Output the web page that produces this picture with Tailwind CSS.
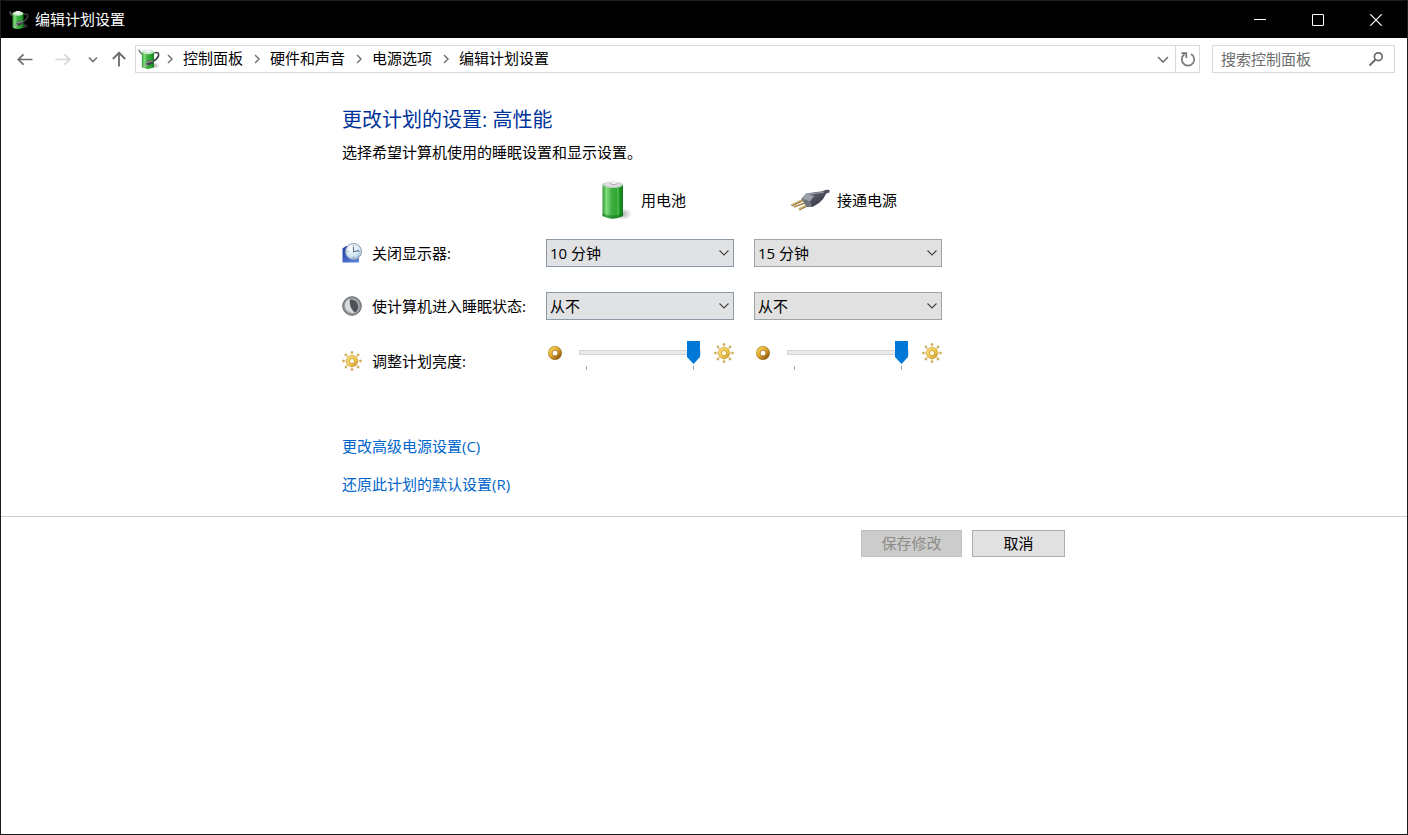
<!DOCTYPE html>
<html lang="zh-CN">
<head>
  <meta charset="UTF-8">
  <meta name="viewport" content="width=device-width, initial-scale=1.0">
  <title>编辑计划设置</title>
  <script src="https://cdn.jsdelivr.net/npm/@tailwindcss/browser@4"></script>
</head>
<body class="min-h-screen flex flex-col bg-white border border-t-0 border-[#1c1c1c] text-black text-[15px] leading-5 font-['Open_Sans','Noto_Sans_CJK_SC',sans-serif]">

  <!-- Shared icon shapes -->
  <svg class="w-0 h-0" aria-hidden="true">
    <defs>
      <linearGradient id="green" x1="0" x2="1" y1="0" y2="0">
        <stop offset="0" stop-color="#2f9a35"/>
        <stop offset="0.2" stop-color="#7fdc7c"/>
        <stop offset="0.45" stop-color="#3fae42"/>
        <stop offset="0.75" stop-color="#2aa52f"/>
        <stop offset="1" stop-color="#0f7a1a"/>
      </linearGradient>
      <linearGradient id="gold" x1="0" x2="1" y1="0" y2="1">
        <stop offset="0" stop-color="#f3d04f"/>
        <stop offset="0.5" stop-color="#dda02c"/>
        <stop offset="1" stop-color="#8a5a12"/>
      </linearGradient>
      <linearGradient id="sunGold" x1="0" x2="1" y1="0" y2="1">
        <stop offset="0" stop-color="#fbe88e"/>
        <stop offset="0.6" stop-color="#efc445"/>
        <stop offset="1" stop-color="#b98a2a"/>
      </linearGradient>
      <linearGradient id="plugBody" x1="0" x2="1" y1="0" y2="1">
        <stop offset="0" stop-color="#8a8e99"/>
        <stop offset="0.5" stop-color="#4c505c"/>
        <stop offset="1" stop-color="#23252d"/>
      </linearGradient>
      <linearGradient id="screen" x1="0" x2="1" y1="0" y2="1">
        <stop offset="0" stop-color="#2238a8"/>
        <stop offset="1" stop-color="#5f8ce8"/>
      </linearGradient>
      <radialGradient id="face" cx="0.4" cy="0.3" r="0.8">
        <stop offset="0" stop-color="#ffffff"/>
        <stop offset="0.6" stop-color="#d3e4f3"/>
        <stop offset="1" stop-color="#8fb0cf"/>
      </radialGradient>
      <radialGradient id="shadow">
        <stop offset="0" stop-color="#777" stop-opacity="0.6"/>
        <stop offset="1" stop-color="#777" stop-opacity="0"/>
      </radialGradient>
    </defs>
    <symbol id="power" viewBox="0 0 20 20">
      <ellipse cx="15" cy="16" rx="5" ry="3" fill="url(#shadow)"/>
      <path d="M.7 1.500Q1.500 4.500 4.500 6" fill="none" stroke="#6a6e70" stroke-width="1.300"/>
      <path d="M15 4.500Q19.500 3 18.600 7Q18 9.500 14 12" fill="none" stroke="#3c4143" stroke-width="1.500"/>
      <path d="M3.500 3.500V17.500Q8.500 20.500 14.500 17.500V3.500Z" fill="url(#green)"/>
      <ellipse cx="9" cy="3.500" rx="5.500" ry="2.200" fill="#c9e9c9"/>
      <ellipse cx="9" cy="2.500" rx="2.600" ry="1.400" fill="#f2f0f5"/>
      <path d="M6.500 14.500L8.500 11.500L14.500 10.500L13.500 14L9.500 16Z" fill="#43494b"/>
      <path d="M7.500 13.200L13.500 11.500M5 15.300L8 14.300M6 17L9 15.500" stroke="#a3aaa5" stroke-width=".9"/>
    </symbol>
    <symbol id="sun" viewBox="0 0 20 20">
      <g fill="#dcb65c" stroke="#ab8c4c" stroke-width=".3">
        <circle cx="10" cy="1.500" r="1.200"/><circle cx="16" cy="4" r="1.200"/>
        <circle cx="18.500" cy="10" r="1.200"/><circle cx="16" cy="16" r="1.200"/>
        <circle cx="10" cy="18.500" r="1.200"/><circle cx="4" cy="16" r="1.200"/>
        <circle cx="1.500" cy="10" r="1.200"/><circle cx="4" cy="4" r="1.200"/>
      </g>
      <path d="M10 2V18M2 10H18M4.500 4.500L15.500 15.500M15.500 4.500L4.500 15.500" stroke="#ead08c" stroke-width="1"/>
      <circle cx="10" cy="10" r="5.800" fill="url(#sunGold)" stroke="#c39a3c" stroke-width=".6"/>
      <circle cx="10" cy="10" r="2.600" fill="#fffae0" stroke="#c49632" stroke-width=".8"/>
    </symbol>
    <symbol id="ring" viewBox="0 0 14 14">
      <circle cx="7" cy="7" r="4.700" fill="none" stroke="#9c6e1c" stroke-width="4.400"/>
      <circle cx="7" cy="7" r="4.700" fill="none" stroke="url(#gold)" stroke-width="3.600"/>
    </symbol>
    <symbol id="down" viewBox="0 0 12 12">
      <path d="M1.500 3.500L6 8L10.500 3.500" fill="none" stroke="currentColor" stroke-width="1.100"/>
    </symbol>
    <symbol id="crumb" viewBox="0 0 8 10">
      <path d="M2 1L6 5L2 9" fill="none" stroke="#777" stroke-width="1.500"/>
    </symbol>
  </svg>

  <header class="h-[38px] flex items-center bg-black border-t border-[#1c1c1c] text-white">
    <svg class="w-5 h-5 ml-2 mr-1.5"><use href="#power"/></svg>
    <span class="flex-1 pb-0.5">编辑计划设置</span>
    <button type="button" aria-label="最小化" class="w-[58px] h-full flex items-center justify-center hover:bg-white/20">
      <svg class="w-3 h-3" viewBox="0 0 12 12"><path d="M0 5.500H12" stroke="#fff"/></svg>
    </button>
    <button type="button" aria-label="最大化" class="w-[58px] h-full flex items-center justify-center hover:bg-white/20">
      <svg class="w-3 h-3" viewBox="0 0 12 12"><path d="M.5 .5H11.500V11.500H.5Z" fill="none" stroke="#fff"/></svg>
    </button>
    <button type="button" aria-label="关闭" class="w-[58px] h-full mr-0.5 flex items-center justify-center hover:bg-red-600">
      <svg class="w-3 h-3" viewBox="0 0 12 12"><path d="M.3 .3L11.700 11.700M11.700 .3L.3 11.700" stroke="#fff" stroke-width="1.200"/></svg>
    </button>
  </header>

  <nav class="flex items-center pt-[7px] pr-3 pl-4">
    <button type="button" aria-label="后退" class="mr-[22px]">
      <svg class="w-4 h-4 block" viewBox="0 0 16 16"><path d="M15.500 8.500H1.500M6.500 3.300L1.300 8.500L6.500 13.700" fill="none" stroke="#6b6b6b" stroke-width="1.700"/></svg>
    </button>
    <button type="button" aria-label="前进" class="mr-4" disabled>
      <svg class="w-4 h-4 block" viewBox="0 0 16 16"><path d="M.5 8.500H14.500M9.500 3.300L14.700 8.500L9.500 13.700" fill="none" stroke="#d6d6d6" stroke-width="1.700"/></svg>
    </button>
    <button type="button" aria-label="最近位置" class="mr-3">
      <svg class="w-3 h-3 block" viewBox="0 0 12 12"><path d="M2 4.500L6 8.500L10 4.500" fill="none" stroke="#777" stroke-width="1.700"/></svg>
    </button>
    <button type="button" aria-label="向上" class="mr-2">
      <svg class="w-4 h-4 block" viewBox="0 0 16 16"><path d="M8 15.500V2M1.800 8L8 1.800L14.200 8" fill="none" stroke="#6b6b6b" stroke-width="1.800"/></svg>
    </button>
    <div class="flex-1 h-7 flex items-center border border-[#d9d9d9] mr-3">
      <svg class="w-[22px] h-[22px] ml-0.5 mr-1"><use href="#power"/></svg>
      <ol class="flex-1 flex items-center gap-2.5 pb-0.5">
        <li class="flex items-center gap-[9px]"><svg class="w-2 h-2.5 ml-0.5 mt-0.5"><use href="#crumb"/></svg><a href="#">控制面板</a></li>
        <li class="flex items-center gap-[9px]"><svg class="w-2 h-2.5 mt-0.5"><use href="#crumb"/></svg><a href="#">硬件和声音</a></li>
        <li class="flex items-center gap-[9px]"><svg class="w-2 h-2.5 mt-0.5"><use href="#crumb"/></svg><a href="#">电源选项</a></li>
        <li class="flex items-center gap-[9px]"><svg class="w-2 h-2.5 mt-0.5"><use href="#crumb"/></svg><a href="#">编辑计划设置</a></li>
      </ol>
      <button type="button" aria-label="以前的位置" class="w-6 h-full flex items-center justify-center">
        <svg class="w-3 h-3" viewBox="0 0 12 12"><path d="M1 4L6 9L11 4" fill="none" stroke="#777" stroke-width="1.700"/></svg>
      </button>
      <button type="button" aria-label="刷新" class="w-6 h-full flex items-center justify-center border-l border-[#d9d9d9]">
        <svg class="w-4 h-4" viewBox="0 0 16 16">
          <path d="M11 3A6.200 6.200 0 1 1 4.500 3.300" fill="none" stroke="#777" stroke-width="1.700"/>
          <path d="M1.500 2.200H6.300V7" fill="none" stroke="#777" stroke-width="1.700"/>
        </svg>
      </button>
    </div>
    <label class="w-[183px] h-7 flex items-center border border-[#d9d9d9] pl-2 pr-2.5">
      <input type="search" aria-label="搜索控制面板" placeholder="搜索控制面板" class="flex-1 min-w-0 outline-none placeholder:text-[#6d6d6d]">
      <svg class="w-4 h-4" viewBox="0 0 16 16"><circle cx="10.300" cy="5.700" r="3.900" fill="none" stroke="#6b6b6b" stroke-width="1.700"/><path d="M7.500 8.500L1.500 14.500" stroke="#6b6b6b" stroke-width="2"/></svg>
    </label>
  </nav>

  <form>
    <main class="w-full max-w-[724px] mx-auto pt-[33px] pb-[22px]">
      <h1 class="text-xl leading-7 text-[#003399]">更改计划的设置: 高性能</h1>
      <p class="mt-2">选择希望计算机使用的睡眠设置和显示设置。</p>

      <div class="mt-[18px] grid grid-cols-[184px_188px_188px] gap-x-5 items-center">
        <div></div>
        <div class="flex items-center gap-[7px] pl-12">
          <svg class="w-10 h-10" viewBox="0 0 40 40">
            <ellipse cx="29" cy="34" rx="9" ry="6" fill="url(#shadow)"/>
            <path d="M8.500 5V36Q18.500 41.500 29 36V5Z" fill="url(#green)"/>
            <path d="M12 8V36M24 8V37" stroke="#8be386" stroke-width="1.500" opacity=".4"/>
            <path d="M8.500 36Q18.500 41.500 29 36V33Q18.500 38 8.500 33Z" fill="#0d6d1a" opacity=".45"/>
            <ellipse cx="18.750" cy="4.800" rx="10.250" ry="3.300" fill="#b5cfb8"/>
            <ellipse cx="18.750" cy="4.200" rx="8" ry="2.400" fill="#e3dfe9"/>
            <ellipse cx="20" cy="3.300" rx="4" ry="1.700" fill="#a8a3b2"/>
            <ellipse cx="20" cy="2.600" rx="3.600" ry="1.400" fill="#f7f5fa"/>
          </svg>
          <span>用电池</span>
        </div>
        <div class="flex items-center gap-[7px] pl-9">
          <svg class="w-10 h-10" viewBox="0 0 40 40">
            <path d="M1.500 25.500L14 19.500" stroke="#8c6f35" stroke-width="2"/>
            <path d="M1.500 25L14 19" stroke="#e3c882" stroke-width="1"/>
            <path d="M4 27L16 22.500" stroke="#a9863f" stroke-width="1.500"/>
            <path d="M9 29.500L20 24" stroke="#8c6f35" stroke-width="2.200"/>
            <path d="M9 29L20 23.500" stroke="#e3c882" stroke-width="1.100"/>
            <path d="M11.500 18.500L16 13.500L26 12Q32 11.500 34 10.500Q36 9.500 39.500 10V12.500Q37 12.500 36 14Q34 19 29 23L22.500 27L17 27Z" fill="url(#plugBody)"/>
            <path d="M11.500 18.500L16 13.500L24 16L20 21.500Z" fill="#9ba0aa"/>
            <path d="M11.500 18.500L20 21.500L22.500 27L17 27Z" fill="#70747e"/>
            <path d="M18 14L27 13Q31 13 34 12" fill="none" stroke="#b1b5be" stroke-width=".8"/>
          </svg>
          <span>接通电源</span>
        </div>
      </div>

      <div class="mt-[19px] grid grid-cols-[184px_188px_188px] gap-x-5 items-center">
        <div class="flex items-center gap-2.5">
          <svg class="w-5 h-5" viewBox="0 0 20 20">
            <path d="M.5 5.500L4 3H17V19.500H.5Z" fill="url(#screen)"/>
            <circle cx="11.500" cy="8.500" r="8" fill="url(#face)" stroke="#8b9bab"/>
            <path d="M11.500 2V3.500M11.500 13.500V15M5 8.500H6.500M16.500 8.500H18" stroke="#7b91a8" stroke-width=".8"/>
            <path d="M11.500 4V8.700L17 7.500" fill="none" stroke="#5a7189" stroke-width="1.100"/>
          </svg>
          <span id="display">关闭显示器:</span>
        </div>
        <div class="relative">
          <select aria-labelledby="display" class="appearance-none block w-full h-7 pl-[3px] pr-6 bg-[#e0e2e4] border border-[#8d99a5]">
            <option>10 分钟</option>
            <option>15 分钟</option>
            <option>从不</option>
          </select>
          <svg class="absolute right-1 top-2 w-3 h-3 text-[#444] pointer-events-none"><use href="#down"/></svg>
        </div>
        <div class="relative">
          <select aria-labelledby="display" class="appearance-none block w-full h-7 pl-[3px] pr-6 bg-[#e1e1e1] border border-[#a0a3a6]">
            <option>15 分钟</option>
            <option>10 分钟</option>
            <option>从不</option>
          </select>
          <svg class="absolute right-1 top-2 w-3 h-3 text-[#444] pointer-events-none"><use href="#down"/></svg>
        </div>
      </div>

      <div class="mt-[25px] grid grid-cols-[184px_188px_188px] gap-x-5 items-center">
        <div class="flex items-center gap-2.5">
          <svg class="w-5 h-5" viewBox="0 0 20 20">
            <circle cx="10" cy="10" r="9.300" fill="#8a8e93" stroke="#6a6e73"/>
            <circle cx="10" cy="10" r="7.800" fill="#a4a8ad"/>
            <path d="M8 3.500Q15 3.500 16.200 10Q16 14.500 13 16.500Q7 11.500 8 3.500Z" fill="#4c5057"/>
            <path d="M7.500 3Q3 5 3 10Q4 17 12.500 17Q6.500 11.500 7.500 3Z" fill="#d9dbde"/>
          </svg>
          <span id="sleep" class="whitespace-nowrap">使计算机进入睡眠状态:</span>
        </div>
        <div class="relative">
          <select aria-labelledby="sleep" class="appearance-none block w-full h-7 pl-[3px] pr-6 bg-[#e0e2e4] border border-[#8d99a5]">
            <option>从不</option>
            <option>10 分钟</option>
          </select>
          <svg class="absolute right-1 top-2 w-3 h-3 text-[#444] pointer-events-none"><use href="#down"/></svg>
        </div>
        <div class="relative">
          <select aria-labelledby="sleep" class="appearance-none block w-full h-7 pl-[3px] pr-6 bg-[#e1e1e1] border border-[#a0a3a6]">
            <option>从不</option>
            <option>15 分钟</option>
          </select>
          <svg class="absolute right-1 top-2 w-3 h-3 text-[#444] pointer-events-none"><use href="#down"/></svg>
        </div>
      </div>

      <div class="mt-[21px] h-10 grid grid-cols-[184px_188px_188px] gap-x-5">
        <div class="flex items-center gap-2.5">
          <svg class="w-5 h-5"><use href="#sun"/></svg>
          <span id="brightness">调整计划亮度:</span>
        </div>
        <div class="flex items-start gap-[13px]">
          <div class="w-5 h-6 pl-0.5 flex items-center"><svg class="w-3.5 h-3.5"><use href="#ring"/></svg></div>
          <div class="w-[122px]">
            <input type="range" aria-labelledby="brightness" min="0" max="100" value="100" class="appearance-none block w-full h-[23px] bg-transparent [&::-webkit-slider-runnable-track]:h-[5px] [&::-webkit-slider-runnable-track]:bg-[#e7eaea] [&::-webkit-slider-runnable-track]:border [&::-webkit-slider-runnable-track]:border-[#d6d6d6] [&::-webkit-slider-thumb]:appearance-none [&::-webkit-slider-thumb]:w-[13px] [&::-webkit-slider-thumb]:h-[23px] [&::-webkit-slider-thumb]:-mt-[10px] [&::-webkit-slider-thumb]:bg-[#0078d7] [&::-webkit-slider-thumb]:[clip-path:polygon(0_0,100%_0,100%_70%,50%_100%,0_70%)]">
            <div class="mt-0.5 px-[7px] flex justify-between"><i class="w-px h-1 bg-[#a5a5a5]"></i><i class="w-px h-1 bg-[#a5a5a5]"></i></div>
          </div>
          <div class="h-6 flex items-center"><svg class="w-5 h-5"><use href="#sun"/></svg></div>
        </div>
        <div class="flex items-start gap-[13px]">
          <div class="w-5 h-6 pl-0.5 flex items-center"><svg class="w-3.5 h-3.5"><use href="#ring"/></svg></div>
          <div class="w-[122px]">
            <input type="range" aria-labelledby="brightness" min="0" max="100" value="100" class="appearance-none block w-full h-[23px] bg-transparent [&::-webkit-slider-runnable-track]:h-[5px] [&::-webkit-slider-runnable-track]:bg-[#e7eaea] [&::-webkit-slider-runnable-track]:border [&::-webkit-slider-runnable-track]:border-[#d6d6d6] [&::-webkit-slider-thumb]:appearance-none [&::-webkit-slider-thumb]:w-[13px] [&::-webkit-slider-thumb]:h-[23px] [&::-webkit-slider-thumb]:-mt-[10px] [&::-webkit-slider-thumb]:bg-[#0078d7] [&::-webkit-slider-thumb]:[clip-path:polygon(0_0,100%_0,100%_70%,50%_100%,0_70%)]">
            <div class="mt-0.5 px-[7px] flex justify-between"><i class="w-px h-1 bg-[#a5a5a5]"></i><i class="w-px h-1 bg-[#a5a5a5]"></i></div>
          </div>
          <div class="h-6 flex items-center"><svg class="w-5 h-5"><use href="#sun"/></svg></div>
        </div>
      </div>

      <div class="mt-[55px] flex flex-col items-start gap-[18px] text-[#0066cc]">
        <a href="#" class="hover:underline">更改高级电源设置(C)</a>
        <a href="#" class="hover:underline">还原此计划的默认设置(R)</a>
      </div>
    </main>

    <footer class="border-t border-[#cccccc] pt-[13px]">
      <div class="w-full max-w-[724px] mx-auto pr-px flex justify-end gap-2.5">
        <button type="submit" disabled class="w-[101px] h-[27px] pb-0.5 bg-[#cccccc] border border-[#bfbfbf] text-[#8b8b86]">保存修改</button>
        <button type="button" class="w-[93px] h-[27px] pb-0.5 bg-[#e1e1e1] border border-[#adadad] hover:bg-[#e5f1fb]">取消</button>
      </div>
    </footer>
  </form>
</body>
</html>
